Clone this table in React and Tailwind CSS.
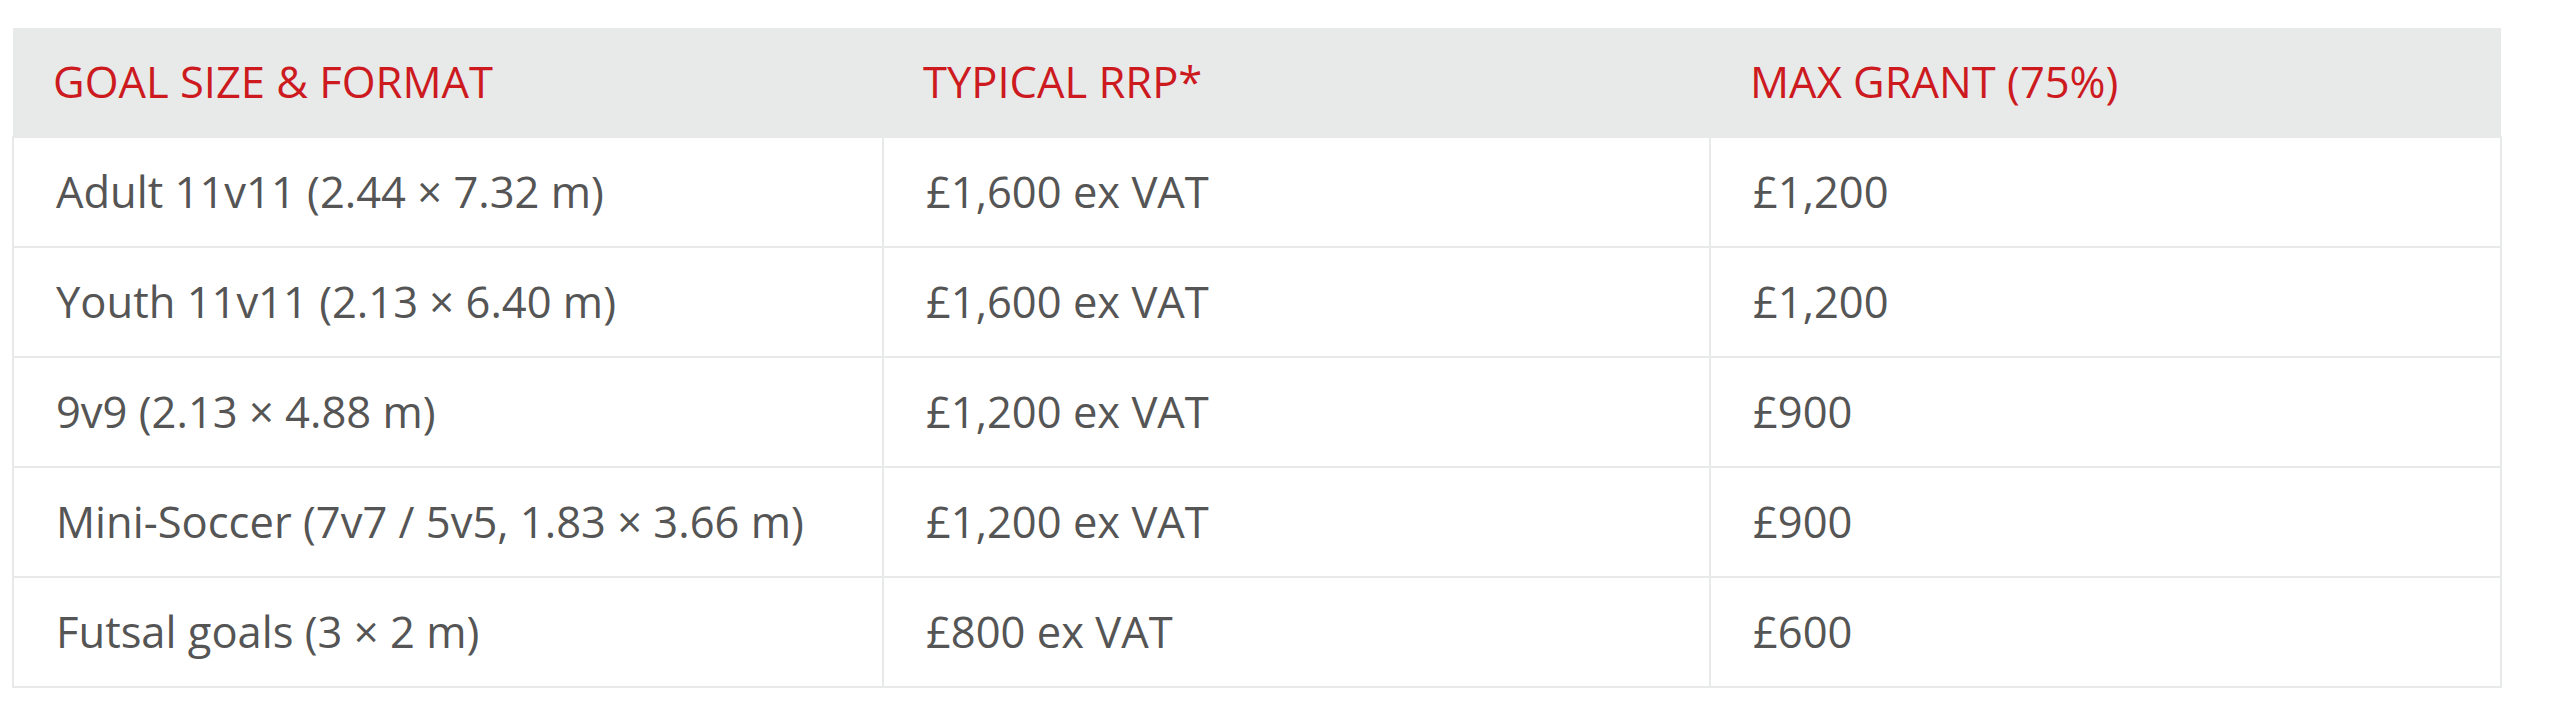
const rows = [
  ["Adult 11v11 (2.44 × 7.32 m)", "£1,600 ex VAT", "£1,200"],
  ["Youth 11v11 (2.13 × 6.40 m)", "£1,600 ex VAT", "£1,200"],
  ["9v9 (2.13 × 4.88 m)", "£1,200 ex VAT", "£900"],
  ["Mini-Soccer (7v7 / 5v5, 1.83 × 3.66 m)", "£1,200 ex VAT", "£900"],
  ["Futsal goals (3 × 2 m)", "£800 ex VAT", "£600"],
];

export default function App() {
  return (
    <div className="min-h-screen bg-white pt-[28px] pl-[12px] font-['Open_Sans',sans-serif]">
      <table className="w-[2488px] table-fixed border-collapse text-[43.5px]">
        <colgroup>
          <col className="w-[870px]" />
          <col className="w-[827px]" />
          <col className="w-[791px]" />
        </colgroup>
        <thead>
          <tr className="h-[109px] bg-[#e8eaea] text-left">
            <th className="pl-[40px] pr-[42px] font-normal text-[#cc1a1f]">GOAL SIZE &amp; FORMAT</th>
            <th className="pl-[40px] pr-[42px] font-normal text-[#cc1a1f]">TYPICAL RRP*</th>
            <th className="pl-[40px] pr-[42px] font-normal text-[#cc1a1f]">MAX GRANT (75%)</th>
          </tr>
        </thead>
        <tbody>
          {rows.map((r) => (
            <tr key={r[0]} className="h-[110px] text-[#555555]">
              {r.map((c, i) => (
                <td key={i} className="border-2 border-[#e8eaea] px-[42px]">
                  {c}
                </td>
              ))}
            </tr>
          ))}
        </tbody>
      </table>
    </div>
  );
}
